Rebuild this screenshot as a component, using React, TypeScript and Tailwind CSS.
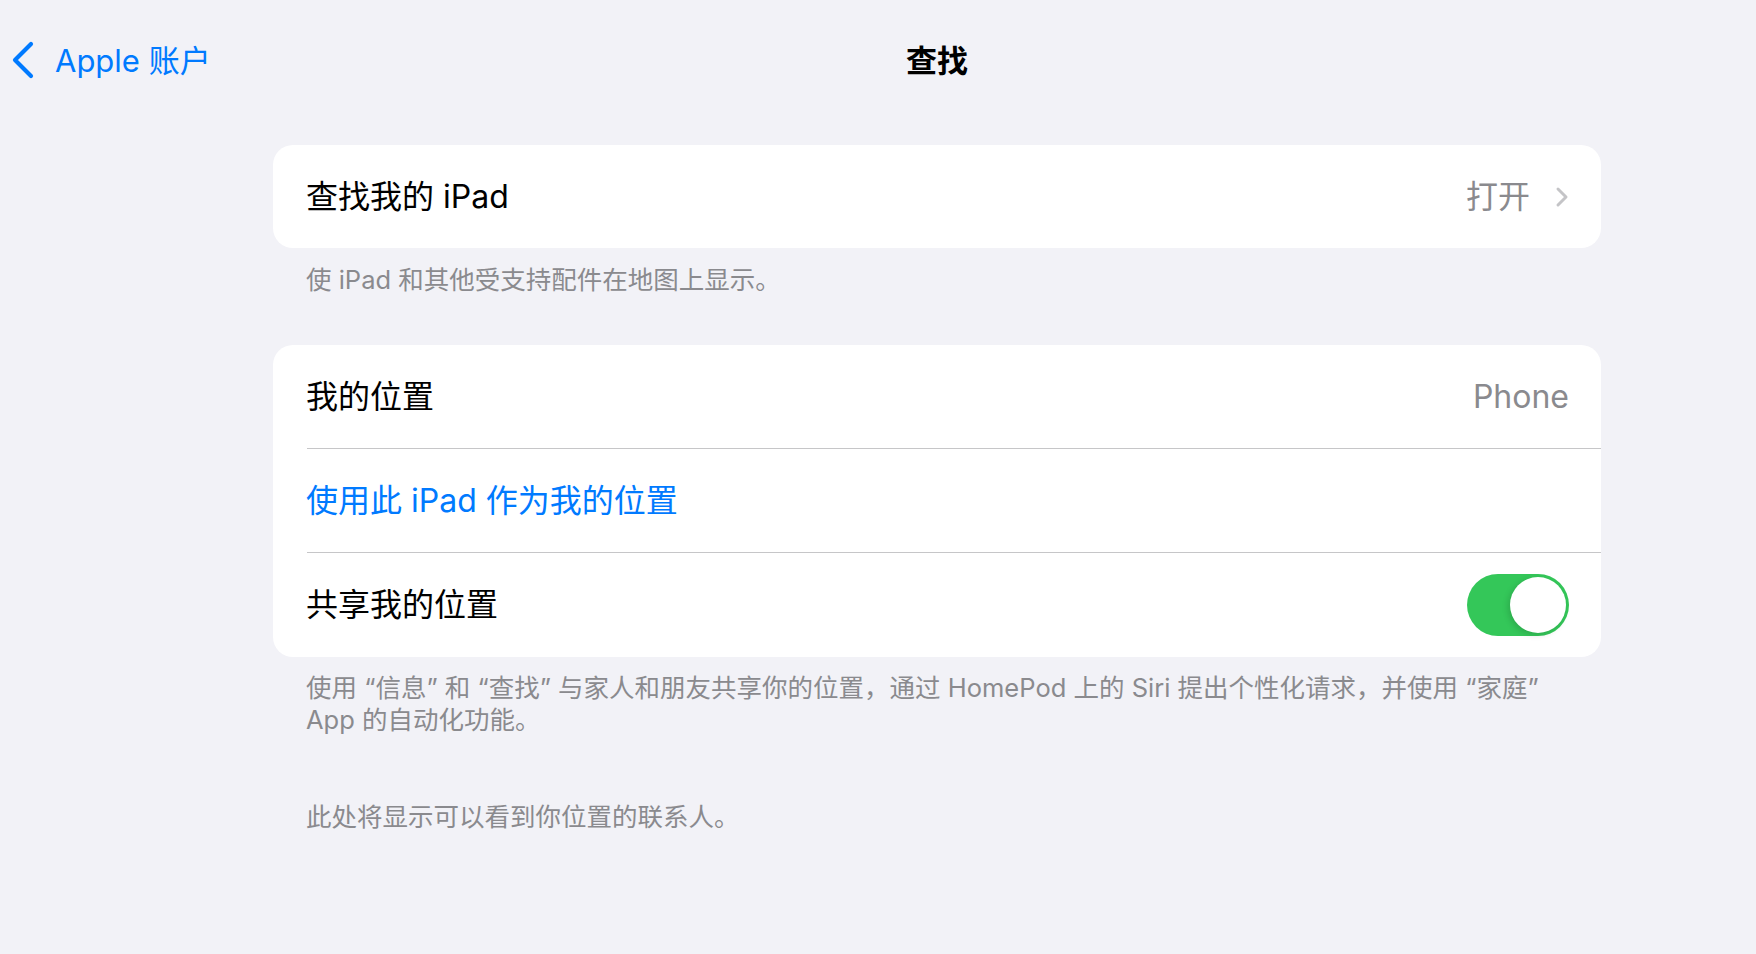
import { ReactNode } from "react";

const font = "font-['Inter','Noto_Sans_CJK_SC',sans-serif]";

function Card({ children }: { children: ReactNode }) {
    return <div className="w-[1328px] rounded-[20px] bg-white overflow-hidden">{children}</div>;
}

function Row({ children }: { children: ReactNode }) {
    return (
        <div className="h-[103px] flex items-center justify-between pl-[33px] pr-[32px] text-[32px] leading-none">
            {children}
        </div>
    );
}

function Separator() {
    return <div className="ml-[34px] h-px bg-[#c6c6c8]" />;
}

function Footer({ children, className = "" }: { children: ReactNode; className?: string }) {
    return (
        <p className={`pl-[33px] pr-[32px] text-[25.5px] leading-[32px] text-[#8a8a8e] ${className}`}>
            {children}
        </p>
    );
}

function Toggle() {
    return (
        <div className="w-[102px] h-[62px] rounded-full bg-[#34c759] p-[3px] flex justify-end">
            <div className="w-[56px] h-[56px] rounded-full bg-white shadow-[-2px_2px_6px_rgba(0,0,0,0.15)]" />
        </div>
    );
}

export default function App() {
    return (
        <div className={`w-full h-[954px] bg-[#f2f2f7] text-black ${font}`}>
            {/* 顶部导航 */}
            <div className="h-[120px] flex items-center">
                <div className="w-[273px] flex items-center pl-[12px] gap-[21px] text-[#007aff]">
                    <svg width="22" height="38" viewBox="0 0 22 38" fill="none">
                        <polyline
                            points="19,3 3,19 19,35"
                            stroke="#007aff"
                            strokeWidth="4.2"
                            strokeLinecap="round"
                            strokeLinejoin="round"
                        />
                    </svg>
                    <span className="text-[31px] leading-none whitespace-nowrap">Apple 账户</span>
                </div>
                <div className="w-[1328px] text-center text-[31px] font-semibold leading-none">查找</div>
            </div>

            <div className="ml-[273px] mt-[25px]">
                <Card>
                    <Row>
                        <span>查找我的 iPad</span>
                        <div className="flex items-center gap-[25px] text-[#8a8a8e]">
                            <span>打开</span>
                            <svg width="14" height="22" viewBox="0 0 14 22" fill="none">
                                <polyline
                                    points="3,3 11,11 3,19"
                                    stroke="#c4c4c7"
                                    strokeWidth="3"
                                    strokeLinecap="round"
                                    strokeLinejoin="round"
                                />
                            </svg>
                        </div>
                    </Row>
                </Card>
                <Footer className="mt-[16px]">使 iPad 和其他受支持配件在地图上显示。</Footer>

                <div className="mt-[49px]">
                    <Card>
                        <Row>
                            <span>我的位置</span>
                            <span className="text-[#8a8a8e]">Phone</span>
                        </Row>
                        <Separator />
                        <Row>
                            <span className="text-[#007aff]">使用此 iPad 作为我的位置</span>
                        </Row>
                        <Separator />
                        <div className="h-[104px] flex items-center justify-between pl-[33px] pr-[32px] text-[32px] leading-none">
                            <span>共享我的位置</span>
                            <Toggle />
                        </div>
                    </Card>
                </div>
                <Footer className="mt-[15px]">
                    使用 “信息” 和 “查找” 与家人和朋友共享你的位置，通过 HomePod 上的 Siri 提出个性化请求，并使用 “家庭”
                    <br />
                    App 的自动化功能。
                </Footer>

                <Footer className="mt-[65px]">此处将显示可以看到你位置的联系人。</Footer>
            </div>
        </div>
    );
}
